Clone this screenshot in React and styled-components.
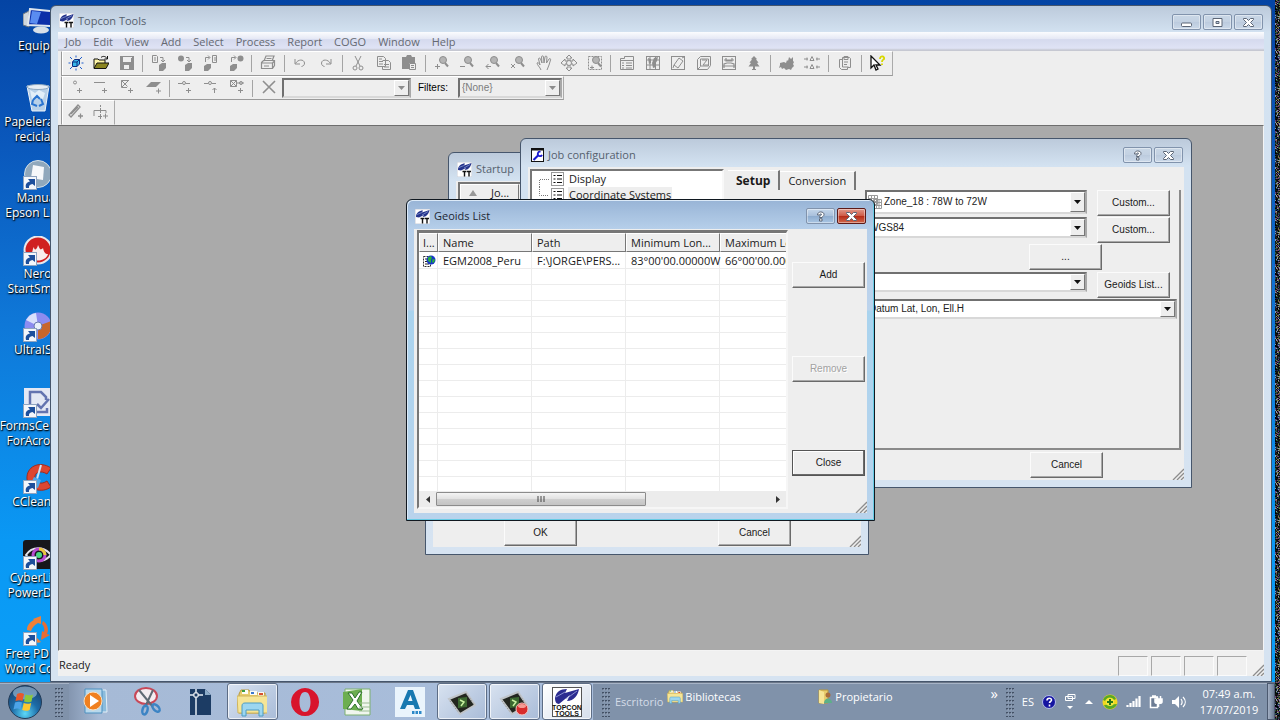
import React from "react";
import styled, { createGlobalStyle, css } from "styled-components";

const ui = `"Open Sans", "Noto Sans", sans-serif`;
const classic = `"Liberation Sans", Arial, sans-serif`;
const FACE = "#eeeeee";
const G = "#8e8e8e";

const GlobalStyle = createGlobalStyle`
  *, *::before, *::after { box-sizing: border-box; }
  body { margin: 0; font: 11px/16px ${ui}; color: #1a1a1a; }
  button, input, select { font: inherit; color: inherit; margin: 0; padding: 0; border-radius: 0; }
  svg { display: block; flex: none; }
`;

/* ---------- desktop ---------- */

const Desktop = styled.div`
  position: relative;
  display: flex;
  flex-direction: column;
  min-height: 100vh;
  overflow: hidden;
  background: linear-gradient(#0444a4 0%, #0a58bc 20%, #0f78d8 45%, #0a98f4 75%, #0aa0f8 100%);
`;

const Workspace = styled.div`
  flex: 1;
  display: flex;
  padding-right: 8px;
`;

const Shortcuts = styled.ul`
  flex: none;
  width: 50px;
  margin: 0;
  padding: 8px 0 0;
  overflow: hidden;
  list-style: none;
`;

const Shortcut = styled.li`
  width: 75px;
  height: 76px;
  display: flex;
  flex-direction: column;
  align-items: center;
  &:last-child { height: 60px; }
`;

const ShortcutLabel = styled.span`
  font-size: 12px;
  line-height: 15px;
  white-space: pre;
  text-align: center;
  color: #fff;
  text-shadow: 0 1px 2px #000, 1px 1px 1px #012;
`;

const EdgeStrip = styled.svg`
  position: absolute;
  top: 0;
  right: 0;
  width: 5px;
  height: 100%;
`;

/* ---------- windows ---------- */

const frameTone = {
  inactive: css`
    border: 1px solid #46566c;
    background: linear-gradient(#bccadb, #d3e2f1 27px, #d6e3f1);
    color: #56616e;
  `,
  active: css`
    border: 1px solid #101820;
    background: linear-gradient(#98b4d6, #b6cfea 29px, #bcd3ec 110px, #a9d3ee 111px, #b9d3ec);
    box-shadow: inset -1px -1px 0 #66cbe4, inset 1px 1px 0 #dceaf8;
    color: #1d2733;
  `,
};

const Frame = styled.section`
  display: flex;
  flex-direction: column;
  border-radius: 6px 6px 0 0;
  padding: 0 7px 7px;
  ${(p) => frameTone[p.$tone || "inactive"]}
`;

const AppFrame = styled(Frame)`
  flex: 1;
  min-width: 0;
  margin-top: 5px;
  padding-bottom: 5px;
`;

const FloatingFrame = styled(Frame)`
  position: absolute;
  left: ${(p) => p.$x}px;
  top: ${(p) => p.$y}px;
  width: ${(p) => p.$w}px;
  height: ${(p) => p.$h}px;
`;

const TitleBar = styled.header`
  flex: none;
  display: flex;
  align-items: center;
  gap: 4px;
  height: ${(p) => p.$h}px;
  padding: ${(p) => p.$pad};
`;

const Title = styled.h2`
  flex: 1;
  margin: 0;
  font: 11px/16px ${ui};
  white-space: nowrap;
`;

const Captions = styled.div`
  display: flex;
  gap: 2px;
  align-self: flex-start;
  padding-top: 5px;
`;

const CaptionButton = styled.button`
  width: 29px;
  height: 16px;
  display: grid;
  place-items: center;
  border: 1px solid ${(p) => (p.$red ? "#5c1a18" : "#8193ac")};
  border-radius: 2px;
  background: ${(p) =>
    p.$red
      ? "linear-gradient(#e09a8c, #cf5c48 48%, #b62c18 52%, #d0684c)"
      : p.$lit
      ? "linear-gradient(#c4d6ea, #a9c0dc 48%, #8eaccf 52%, #a9c6e4)"
      : "linear-gradient(#c9d7e6, #c3d1e2 50%, #bccbde 52%, #cbd9e9)"};
  box-shadow: inset 0 0 0 1px rgba(255, 255, 255, 0.4);
`;

const Client = styled.div`
  flex: 1;
  min-height: 0;
  display: flex;
  flex-direction: column;
  position: relative;
  background: ${FACE};
  color: #1a1a1a;
`;

const GripCorner = styled.svg`
  position: absolute;
  right: 0;
  bottom: 0;
`;

/* ---------- menu and toolbars ---------- */

const MenuBar = styled.nav`
  flex: none;
  display: flex;
  height: 19px;
  padding-left: 7px;
  gap: 12px;
  background: linear-gradient(#fbfcfe, #e6e9f5 35%, #d5daee 40%, #dfe3f5 85%, #c6c8d2 95%);
`;

const MenuItem = styled.button`
  border: 0;
  background: none;
  line-height: 18px;
  color: #656972;
`;

const Band = styled.div`
  flex: none;
  display: flex;
  height: ${(p) => p.$h}px;
  padding-left: 3px;
`;

const Tools = styled.div`
  display: flex;
  align-items: center;
  border-top: 1px solid #fff;
  border-left: 1px solid #999;
  border-right: 1px solid #aaa;
  border-bottom: 1px solid ${(p) => (p.$flat ? FACE : "#9a9a9a")};
  box-shadow: inset 1px 0 0 #fff;
  padding-left: 1px;
  width: ${(p) => p.$w}px;
`;

const ToolGroup = styled.div`
  display: flex;
  align-items: center;
  flex: none;
  width: ${(p) => p.$w}px;
`;

const Tool = styled.button`
  flex: 1;
  display: grid;
  place-items: center;
  height: 20px;
  padding-bottom: 2px;
  border: 0;
  background: none;
`;

const Divider = styled.i`
  flex: none;
  width: 1px;
  height: 17px;
  margin: 0 3px;
  background: #a4a4a4;
`;

const FilterLabel = styled.label`
  font: 10px/16px ${classic};
  color: #000;
  width: 47px;
  padding-left: 7px;
`;

const ComboBox = styled.span`
  position: relative;
  display: flex;
  flex: ${(p) => (p.$w ? "none" : 1)};
  width: ${(p) => (p.$w ? p.$w + "px" : "auto")};
  height: ${(p) => p.$h || 20}px;
  border: 2px solid;
  border-color: #707070 #a8a8a8 #d8d8d8 #707070;
  background: ${(p) => (p.$off ? FACE : "#fff")};
  select {
    flex: 1;
    width: 100%;
    appearance: none;
    border: 0;
    outline: 0;
    background: none;
    padding-left: ${(p) => p.$inset || 2}px;
    font: 10px/14px ${classic};
    color: ${(p) => (p.$off ? "#7c7c7c" : "#222")};
    opacity: 1;
  }
`;

const ComboArrow = styled.span`
  position: absolute;
  top: 0;
  right: 0;
  bottom: 0;
  width: 15px;
  display: grid;
  place-items: center;
  pointer-events: none;
  background: ${FACE};
  border: 1px solid;
  border-color: #fff #777 #777 #fff;
`;

const ComboIcon = styled.span`
  position: absolute;
  left: 1px;
  top: 3px;
  pointer-events: none;
`;

const Mdi = styled.main`
  flex: 1;
  background: #aaaaaa;
  border: 1px solid;
  border-color: #6e6e6e #f4f4f4 #f4f4f4 #6e6e6e;
`;

const StatusBar = styled.footer`
  flex: none;
  position: relative;
  display: flex;
  align-items: center;
  gap: 3px;
  height: 25px;
  padding: 0 17px 0 1px;
  background: #f0f0f0;
`;

const StatusText = styled.span`
  flex: 1;
  padding-top: 2px;
`;

const StatusCell = styled.span`
  width: 30px;
  height: 20px;
  align-self: flex-end;
  border: 1px solid;
  border-color: #a8a8a8 #fbfbfb #fbfbfb #a8a8a8;
`;

/* ---------- dialog parts ---------- */

const PushButton = styled.button`
  flex: none;
  width: 73px;
  height: 26px;
  background: ${FACE};
  border: 1px solid;
  border-color: #fbfbfb #6a6a6a #6a6a6a #fbfbfb;
  box-shadow: inset -1px -1px 0 #a8a8a8;
  font: 10px/16px ${classic};
  color: #1a1a1a;
  &:disabled { color: #a2a2a2; text-shadow: 1px 1px 0 #fff; }
  ${(p) => p.$default && css`border-color: #555; box-shadow: inset -1px -1px 0 #6a6a6a, inset 1px 1px 0 #fff;`}
`;

const ListHeader = styled.div`
  display: flex;
  margin: 1px 2px 0;
  border: 2px solid #777;
  border-bottom: 0;
`;

const HeaderCell = styled.span`
  display: flex;
  align-items: center;
  height: 18px;
  gap: 14px;
  width: ${(p) => p.$w}px;
  padding-left: 8px;
  border: 1px solid;
  border-color: #fff #777 #777 #fff;
`;

const Columns = styled.div`
  flex: 1;
  min-height: 0;
  display: flex;
  gap: 4px;
  padding: 2px 3px 0 2px;
`;

const Tree = styled.ul`
  flex: none;
  width: 194px;
  margin: 0;
  padding: 0 0 0 7px;
  list-style: none;
  background: #fff;
  border: 2px solid;
  border-color: #777 #f8f8f8 #f8f8f8 #777;
`;

const TreeItem = styled.li`
  display: flex;
  align-items: center;
  height: 16px;
  gap: 4px;
  span { padding: 0 1px; background: ${(p) => (p.$selected ? FACE : "none")}; }
  svg + svg { margin-left: -2px; }
`;

const Tabbed = styled.div`
  flex: 1;
  display: flex;
  flex-direction: column;
`;

const TabList = styled.div`
  display: flex;
  align-items: flex-end;
  height: 21px;
`;

const Tab = styled.button`
  height: ${(p) => (p.$on ? 20 : 19)}px;
  padding: 0 8px;
  border: 0;
  border-right: 2px solid #777;
  border-top: 1px solid #fff;
  background: none;
  font-size: ${(p) => (p.$on ? 12 : 11)}px;
  font-weight: ${(p) => (p.$on ? 700 : 400)};
`;

const TabPanel = styled.div`
  flex: 1;
  border: solid;
  border-width: 0 2px 2px 0;
  border-color: #8a8a8a;
`;

const Field = styled.div`
  display: flex;
  align-items: flex-start;
  height: ${(p) => (p.$tall ? 28 : 27)}px;
  gap: 10px;
  padding: 0 ${(p) => p.$right || 9}px 0 137px;
  justify-content: flex-end;
`;

const Footer = styled.div`
  flex: none;
  display: flex;
  gap: ${(p) => p.$gap || 0}px;
  justify-content: flex-end;
  padding: ${(p) => p.$pad};
`;

const GeoidBody = styled.div`
  flex: 1;
  min-height: 0;
  display: flex;
  gap: 4px;
  padding: 1px 2px 4px 3px;
`;

const ListView = styled.div`
  flex: 1;
  min-width: 0;
  display: flex;
  flex-direction: column;
  overflow: hidden;
  background: #fff;
  border: solid;
  border-width: 3px 2px 2px 2px;
  border-color: #777 #f6f6f6 #f6f6f6 #777;
`;

const ListScroll = styled.div`
  flex: 1;
  min-height: 0;
  overflow: hidden;
`;

const Table = styled.table`
  width: 395px;
  table-layout: fixed;
  border-collapse: separate;
  border-spacing: 0;
  th, td {
    padding: 0 0 0 5px;
    text-align: left;
    font-weight: 400;
    white-space: nowrap;
  }
  th {
    height: 19px;
    padding-left: 4px;
    overflow: hidden;
    text-overflow: ellipsis;
    line-height: 16px;
    background: ${FACE};
    border: 1px solid;
    border-color: #fff #777 #777 #fff;
  }
  td {
    height: 16px;
    line-height: 14px;
    border-right: 1px solid #ececec;
    border-bottom: 1px solid #ececec;
  }
  tbody tr:first-child td { padding-top: 2px; }
  th:first-child, td:first-child { padding-left: 3px; text-overflow: clip; }
`;

const ScrollBar = styled.div`
  flex: none;
  display: flex;
  align-items: center;
  height: 16px;
  background: #ececec;
`;

const ScrollArrow = styled.button`
  width: 17px;
  height: 16px;
  display: grid;
  place-items: center;
  border: 0;
  background: none;
`;

const Track = styled.div`
  flex: 1;
`;

const Thumb = styled.div`
  width: 63%;
  height: 14px;
  display: grid;
  place-items: center;
  border: 1px solid #8c8c8c;
  border-radius: 1px;
  background: linear-gradient(#f4f4f4, #e2e2e2 48%, #cfcfcf 52%, #c4c4c4);
`;

const Commands = styled.div`
  flex: none;
  display: flex;
  flex-direction: column;
  gap: 68px;
  padding-top: 32px;
`;

/* ---------- taskbar ---------- */

const TaskBar = styled.footer`
  position: relative;
  flex: none;
  display: flex;
  align-items: center;
  height: 38px;
  padding-right: 5px;
  background: #8092aa;
  border-top: 1px solid #6a7688;
  box-shadow: inset 0 1px 0 #a6b3c6;
  color: #fff;
`;

const StartButton = styled.button`
  width: 50px;
  display: grid;
  place-items: center;
  border: 0;
  background: none;
`;

const Handle = styled.span`
  flex: none;
  margin-left: ${(p) => p.$gap || 0}px;
`;

const Pinned = styled.div`
  flex: none;
  display: flex;
  align-self: stretch;
  width: 524px;
  margin-left: 6px;
  background: linear-gradient(90deg, #8496b0, #a6bad6 30px, #a9bedc);
`;

const TaskButton = styled.button`
  flex: 1;
  display: grid;
  place-items: center;
  border: 1px solid transparent;
  border-radius: 3px;
  margin: 0 1px;
  background: none;
  ${(p) =>
    p.$open &&
    css`
      border-color: #5d6d85;
      background: linear-gradient(135deg, ${p.$open === 2 ? "#fff, #d5deeb" : "#d8e2f0, #a9bcd8"});
      box-shadow: inset 0 0 0 1px rgba(255, 255, 255, 0.7);
    `}
`;

const BandTitle = styled.span`
  margin-left: 5px;
  color: #d4dce8;
`;

const BandLink = styled.a`
  display: flex;
  align-items: center;
  gap: 2px;
  width: ${(p) => p.$w}px;
  padding-bottom: 10px;
  color: #fff;
  text-decoration: none;
`;

const Links = styled.div`
  flex: 1;
  display: flex;
  margin-left: 4px;
`;

const Chevron = styled.button`
  border: 0;
  background: none;
  font-size: 15px;
  padding: 0 8px 18px 0;
`;

const Tray = styled.div`
  display: flex;
  align-items: center;
  gap: 8px;
  margin-left: 8px;
`;

const Clock = styled.time`
  width: 72px;
  margin: 0 2px 0 7px;
  text-align: center;
`;

const ShowDesktop = styled.button`
  width: 8px;
  align-self: stretch;
  border: 1px solid #4c5a70;
  background: linear-gradient(90deg, #a3b0c4, #6c7c94);
`;

/* ---------- drawings ---------- */

const TopconLogo = ({ size = 15 }) => (
  <svg width={size} height={size} viewBox="0 0 15 15">
    <rect width="15" height="15" fill="#fff" stroke="#c9ccd6" />
    <path d="M1 8C1 4 4 1.500 8 1.500L7 3.500 14.500 1C14 4.500 11.500 8 7.500 8L9 6 4 8.500z" fill="#26348c" />
    <path d="M2 5.500L7 3.500M7 6L13 2.500" stroke="#8ea2d8" strokeWidth=".7" />
    <path d="M5.500 9.500h4M7.500 9.500v5M10 9.500h4M12 9.500v5" stroke="#111" strokeWidth="1.400" />
  </svg>
);

const WrenchIcon = () => (
  <svg width="13" height="14" viewBox="0 0 13 14">
    <rect x=".5" y=".5" width="12" height="13" fill="#fff" stroke="#111" />
    <path d="M1 1.500h11" stroke="#111" strokeWidth="2" />
    <path d="M2.500 12L7 7.500" stroke="#1a1ad0" strokeWidth="2.200" />
    <path d="M9.500 3.800a2.200 2.200 0 1 0 1.500 3" fill="none" stroke="#1a1ad0" strokeWidth="1.800" />
  </svg>
);

const PageIcon = () => (
  <svg width="13" height="14" viewBox="0 0 13 14">
    <rect x=".5" y=".5" width="12" height="13" fill="#fff" stroke="#999" />
    <path d="M2.500 3.500h2M2.500 7h2M2.500 10.500h2M6 3.500h5M6 7h5M6 10.500h5" stroke="#111" strokeWidth="1.200" />
  </svg>
);

const TreeLines = ({ last }) => (
  <svg width="10" height="16">
    <path d={last ? "M.5 0V8.500H10" : "M.5 16V8.500H10"} fill="none" stroke="#777" strokeDasharray="1 1" />
  </svg>
);

const GeoidIcon = () => (
  <svg width="14" height="13" viewBox="0 0 14 13">
    <path d="M1.500 1.500h7v10h-7z" fill="#fff" stroke="#333" strokeDasharray="2 1" />
    <path d="M3 4h2M3 6.500h2M3 9h4" stroke="#222" />
    <circle cx="9" cy="5" r="4.500" fill="#1636c8" />
    <path d="M6 2.500l3-1.500 1 2-1 1.500v3.500L6 6zM10.500 4l2.500.5-1 3-2 0z" fill="#27b03c" />
  </svg>
);

const GridIcon = () => (
  <svg width="14" height="14" viewBox="0 0 14 14">
    <path d="M.5.500h9v9h-9zM.5 3.500h9M.5 6.500h9M3.500.500v9M6.500.500v9M5.500 4.500h8v9h-8zM5.500 7.500h8M5.500 10.500h8M8.500 4.500v9M11 4.500v9" fill="none" stroke="#9a9a9a" />
  </svg>
);

const Down = ({ c = "#111" }) => (
  <svg width="7" height="4"><path d="M0 0H7L3.500 4Z" fill={c} /></svg>
);

const Grip = () => (
  <GripCorner width="12" height="12">
    <path d="M1 12L12 1M5 12L12 5M9 12L12 9" stroke="#8c8c8c" strokeWidth="1.300" />
  </GripCorner>
);

const glyphs = {
  min: <rect x="1.500" y="6" width="10" height="3.500" rx="1" />,
  max: <path fillRule="evenodd" d="M2 1.500h9v8H2zM5 4.500v2h3v-2z" />,
  close: <path d="M1.500 1.500h3l2 2 2-2h3v1L8.500 5.500l3 3v1h-3l-2-2-2 2h-3v-1l3-3-3-3z" />,
  help: <path d="M3.500 4c0-4 6.500-4 6.500-.5 0 2-2 2-2 3H5.500c0-2 2-2 2-3 0-1-1.500-1-1.500.500zM5.500 7.800H8V10H5.500z" />,
};

const Glyph = ({ k }) => (
  <svg width="13" height="11" viewBox="0 0 13 11">
    <g fill="#fff" stroke="#5c6676" strokeWidth="1">{glyphs[k]}</g>
  </svg>
);

const Caption = ({ k, label, ...rest }) => (
  <CaptionButton aria-label={label} {...rest}><Glyph k={k} /></CaptionButton>
);

const plus = "M9 11.500h5M11.500 9v5";
const lens = (extra) => (
  <>
    <circle cx="9" cy="5" r="3.500" fill="#b4b4b4" stroke={G} />
    <path d="M11 8l3 3.500" stroke={G} strokeWidth="2" />
    <path d={extra} stroke={G} fill="none" />
  </>
);
const blob = "M8 10l3-2h4v5l-3 3H8z";

const toolArt = {
  new: (
    <>
      <path d="M2 2l2 2M8 .5v2M14 2l-2 2M.5 8h2M13.500 8h2M2 14l2-2M8 13.500v2M14 14l-2-2" stroke="#1c5ccc" />
      <path d="M4.500 7l2-2.500h5V9l-2.500 2.500H4.500z" fill="#38b8e8" stroke="#0c2c80" />
      <path d="M4.500 7H9v4.500M9 7l2.500-2.500" fill="none" stroke="#0c2c80" />
    </>
  ),
  open: (
    <>
      <path d="M1 13V4h4l1 1h6v3" fill="#fff6a8" stroke="#111" />
      <path d="M1 13.500L4 8h12l-3 5.500z" fill="#8a8420" stroke="#111" />
      <path d="M8 2.500c2-2 5-1 6 1M14.500 1v3h-3" fill="none" stroke="#111" />
    </>
  ),
  save: <path fillRule="evenodd" fill={G} d="M1 1h14v14H1zM4 2v5h8V2zM5 10v4h5v-4zM12 2h1v1h-1z" />,
  imp1: <><path d="M1.500.500h4l1 1v6h-5zM3 3h2M3 5h2M9 2.500h3v4M10 5l2 2 2-2" fill="none" stroke={G} /><path d={blob} fill={G} /></>,
  imp2: <><circle cx="4" cy="3.500" r="3" fill={G} /><path d="M9 2.500h3v4M10 5l2 2 2-2" fill="none" stroke={G} /><path d={blob} fill={G} /></>,
  exp1: <><path d="M10.500.500h4v7h-4zM12 3h2M12 5h2M3.500 7V2.500h4M6 .5l2 2-2 2" fill="none" stroke={G} /><path d="M2 11l3-2h4v4l-3 3H2z" fill={G} /></>,
  exp2: <><circle cx="12.500" cy="3.500" r="3" fill={G} /><path d="M3.500 7V2.500h4M6 .5l2 2-2 2" fill="none" stroke={G} /><path d="M2 11l3-2h4v4l-3 3H2z" fill={G} /></>,
  print: <path d="M4 6l2-5h8l-2 5M1.500 7.500l2-2h11v5l-2 3h-11zM1.500 8h11v5M12.500 8l2-2M4 11h5M6.500 3.500h5" fill="none" stroke={G} strokeWidth="1.200" />,
  undo: <path d="M3 4v5h5M3.500 8.500C6 4 12 4 12.500 8c0 2-1 3-3 3.500" fill="none" stroke={G} />,
  redo: <path d="M13 4v5H8M12.500 8.500C10 4 4 4 3.500 8c0 2 1 3 3 3.500" fill="none" stroke={G} />,
  cut: <><path d="M5 1l5 10M11 1L6 11" stroke={G} /><circle cx="5" cy="13" r="2" fill="none" stroke={G} /><circle cx="11" cy="13" r="2" fill="none" stroke={G} /></>,
  copy: <path d="M1.500 1.500h6l2 2v8h-8zM6.500 5.500h6l2 2v7h-8v-3M3 4h3M3 6.500h4M3 9h4M8 9.500h5M8 12h5" fill="none" stroke={G} />,
  paste: <><path d="M1 2h4l1-2h4l1 2h3v6H8v6H1z" fill={G} /><path d="M8.500 8.500h6v6h-6zM10 10.500h3M10 12.500h3" fill="#eee" stroke={G} /></>,
  zin: lens("M1 11.500h5M3.500 9v5"),
  zout: lens("M1 11.500h5"),
  zprev: lens("M1 11.500h5M3.500 9L1 11.500L3.500 14"),
  zall: lens("M1 9l4 4M5 9l-4 4"),
  hand: <path d="M5 15C4 12 1 10 1 8c1-1 2 0 3 2L2.500 4c0-1 1.500-1.500 2 0L6 8 5.500 2c0-1.500 2-1.500 2 0L8 8l1-6c0-1.500 2-1 2 0l-.5 6L13 4c1-1 2 0 1.500 1L13 10l-2 5" fill="none" stroke={G} />,
  pan: <><path d="M8 0l3 3H9v3h3V4l4 4-4 3V9H9v4h2l-3 3-3-3h2V9H4v2L0 8l4-4v2h3V3H5z" fill="none" stroke={G} /><circle cx="8" cy="8" r="2.500" fill="#eee" stroke={G} /></>,
  zwin: <><rect x="1.500" y="1.500" width="13" height="13" fill="none" stroke={G} strokeDasharray="2 1" />{lens("M3 12.500h4M5 10.500v4")}</>,
  list: <path d="M1.500 3.500h4v-2h9v13h-13zM1.500 5.500h13M3 8h2M7 8h6M3 10.500h2M7 10.500h6M3 13h2M7 13h6" fill="none" stroke={G} />,
  map: <><rect x="1.500" y="1.500" width="13" height="13" fill="none" stroke={G} /><path d="M2 5h12M2 10h12M5 2v12M10.500 2v12" stroke={G} /><path d="M3 3l3 1v4L4 9zM7 8l2-5 4-1-1 4-2 3 1 3-3 1z" fill={G} /></>,
  cad: <><rect x="1.500" y="1.500" width="13" height="13" fill="none" stroke={G} /><path d="M4 10l5-7 4 3-5 7zM4 10l-1 3M12 3l2-1" fill="none" stroke={G} /></>,
  three: <path d="M1.500 4.500l3-3h10v9l-3 4h-10zM4.500 4v7h8V4zM6 5l5 0-4 5h5M1.500 14.500l3-3" fill="none" stroke={G} />,
  gps: <><rect x="1.500" y="1.500" width="13" height="13" fill="none" stroke={G} /><path d="M3 5h10M5 3v3h6V3M3 13V9l3-1h4l3 1v4M2 11h12" fill="none" stroke={G} strokeWidth="1.200" /></>,
  tree: <path d="M8 1l3 3-1 .5 2.500 3-1.500.500 2.500 3.500H9V14h1v1H6v-1h1v-2.500H2.500L5 8 3.500 7.500 6 4.500 5 4z" fill={G} />,
  dozer: <path d="M1 8l4-1 2 1 1-3 1 1 1-4 2 2 2-2v4l1 1-1 2 1 2-2 2-1 2-2-1-3 1-2-2-2 1-1-2-2 1 1-3z" fill={G} />,
  adj: <path d="M8 1.500l2 4H6zM8 9.500l2 4H6zM0 4h4M3 2.500v3M12 4h4M13 2.500v3M0 12h4M3 10.500v3M12 12h4M13 10.500v3" fill="none" stroke={G} />,
  report: <path d="M2.500 4.500h3v-2h7l1 1v9h-3v2h-6l-2-2zM5.500 4v8h6M7 1.500h4v3H7zM7 7h4M7 9.500h3" fill="none" stroke={G} />,
  help: (
    <>
      <path d="M2 1v12l3-3 2 5 2-1-2-4h4z" fill="#fff" stroke="#111" strokeWidth="1.300" />
      <path d="M11 4c0-4 5-3 4 0-1 1-2 1-2 3M13 8.500V10" fill="none" stroke="#d8d800" strokeWidth="1.800" />
    </>
  ),
  point: <><circle cx="7" cy="3.500" r="1.500" fill="none" stroke={G} /><path d={plus} stroke={G} /></>,
  line: <path d={"M1 3.500h11" + plus} stroke={G} />,
  poly: <path d={"M10 1.500H2.500v7H8M2.500 1.500l6 6M3 8l6.500-6.500" + plus} fill="none" stroke={G} />,
  plane: <><path d="M1 8l5-5h10l-5 5z" fill={G} /><path d="M11 12h5M13.500 9.500v5" stroke={G} /></>,
  obs1: <><path d={"M1 4.500h4M9 4.500h4" + plus} stroke={G} /><circle cx="7" cy="4" r="1.500" fill="none" stroke={G} /></>,
  obs2: <><path d="M1 4.500h4M9 4.500h4M11.500 14V9M9.500 11l2-2 2 2" fill="none" stroke={G} /><circle cx="7" cy="4" r="1.500" fill="none" stroke={G} /></>,
  obs3: <><path d={"M1.500 1.500h6v6h-6zM1.500 1.500l6 6M1.500 7.500l6-6M7 4h8" + plus} fill="none" stroke={G} /><circle cx="12" cy="4" r="1.500" fill="none" stroke={G} /></>,
  del: <path d="M2 2l12 12M14 2L2 14" stroke={G} strokeWidth="1.600" />,
  road: <path d="M1 11L10 1l2 2-9 10zM3 10l7-7M10 12h5M12.500 9.500v5" fill="none" stroke={G} strokeWidth="1.300" />,
  cross: <><path d="M1 12V6.500h12V9M10 12h5M12.500 9.500v5M5 12.500h4" fill="none" stroke={G} /><path d="M7.500 1v14" stroke={G} strokeDasharray="2 1" /></>,
};

const ToolIcon = ({ k }) => <svg width="16" height="16" viewBox="0 0 16 16">{toolArt[k]}</svg>;

const renderTools = (keys) =>
  keys.split(" ").map((k, i) =>
    k === "|" ? <Divider key={i} /> : <Tool key={i} aria-label={k}><ToolIcon k={k} /></Tool>
  );

const Arrow = () => (
  <g>
    <rect x="0.500" y="16.500" width="13" height="13" fill="#f4f7fb" stroke="#8fa4c0" />
    <path d="M3 28c-1-4 1-6 4-6.500L5 19h7v7l-2.500-2C7 24.500 5.500 25.500 6 28z" fill="#1d4f9c" />
  </g>
);

const shortcutArt = {
  pc: (
    <>
      <path d="M0 6l6-3v16l-6-2z" fill="#cfd6dc" stroke="#6a7480" />
      <path d="M7 1l21 2v15l-23-1z" fill="#0d2fa8" stroke="#dfe6ee" strokeWidth="2" />
      <path d="M9 3l9 1-4 12-7-1z" fill="#5a8cf0" />
      <ellipse cx="18" cy="22" rx="8" ry="3.500" fill="#d8e0e8" />
    </>
  ),
  bin: (
    <>
      <path d="M4 2h22l-4 25H9z" fill="#b8d0e8" stroke="#eef4fa" />
      <ellipse cx="15" cy="3" rx="11" ry="2.500" fill="#e8eef4" stroke="#8fa8c0" />
      <path d="M7 6l5 3 4-3 6 3-2 6-6-2-5 3z" fill="#eef6fc" opacity=".8" />
      <path d="M10 16l4-4 3 3M18 15l2 5-4 2M14 22l-5-2 1-4" fill="none" stroke="#2a74d0" strokeWidth="2" />
    </>
  ),
  manual: <><circle cx="15" cy="14" r="13.500" fill="#90a8bc" stroke="#d4e0e8" /><path d="M10 5l11 2-1 13-12-2z" fill="#f6f8fa" /></>,
  nero: <><circle cx="15" cy="14" r="13.500" fill="#d02020" stroke="#e8e8ec" strokeWidth="2" /><path d="M6 19c4 0 3-6 5-8 0 4 3 3 4-2 2 4 2 6 5 3 1 4 2 6 5 6-2 8-16 9-19 1z" fill="#f8eceb" /></>,
  iso: <><circle cx="15" cy="14" r="13.500" fill="#8c8cf0" /><path d="M15 14L28 9a14 14 0 0 1-13 18z" fill="#c8662c" /><path d="M15 14L3 8a14 14 0 0 1 10-7z" fill="#d8e0fc" /><circle cx="15" cy="14" r="4" fill="#e8f0fa" stroke="#6a7ab0" /></>,
  forms: <><rect x="1" y="0" width="28" height="28" fill="#e4e8f4" /><path d="M7 17V4h11l5 5v3M12 24h12v-4M14 16l4 4 8-9" fill="none" stroke="#6474b0" strokeWidth="2.500" /></>,
  cc: <><path d="M28 4C16-4 3 3 4 15c1 10 14 15 24 8l-4-6c-6 4-11 2-12-3-1-6 6-8 12-4z" fill="#dc4630" stroke="#9c2c20" /><path d="M18 1l-4 14" stroke="#d0e4f4" strokeWidth="2" /><path d="M11 13l7 3-3 8-8-3z" fill="#4ca8ec" /></>,
  dvd: <><rect width="30" height="29" rx="3" fill="#17171b" /><path d="M3 15c6-9 18-9 25 0-7 8-19 8-25 0z" fill="none" stroke="#e4e4ec" strokeWidth="2" /><circle cx="16" cy="15" r="6" fill="none" stroke="#b84cd0" strokeWidth="3" /><path d="M16 9a6 6 0 0 1 6 6" fill="none" stroke="#e8c83c" strokeWidth="3" /><circle cx="16" cy="15" r="3" fill="#48d880" /></>,
  pdf: <><path d="M10 3l8-3v8l-3-1C11 9 9 12 8 15l-4-1c0-5 3-8 7-10z" fill="#f08038" /><path d="M20 5c5 3 6 9 4 13l3 1-9 5 1-9 2 1c1-3 0-6-2-8z" fill="#e86c34" /><path d="M14 22l4 4c-2 1-4 1-5 0z" fill="#f08038" /></>,
};

const shortcuts = [
  ["pc", "Equipo", false],
  ["bin", "Papelera de\nreciclaje", false],
  ["manual", "Manual\nEpson L210", true],
  ["nero", "Nero\nStartSmart", true],
  ["iso", "UltraISO", true],
  ["forms", "FormsCentral\nForAcrobat", true],
  ["cc", "CCleaner", true],
  ["dvd", "CyberLink\nPowerDVD", true],
  ["pdf", "Free PDF to\nWord Con...", true],
];

const Orb = () => (
  <svg width="36" height="36" viewBox="0 0 36 36">
    <defs>
      <radialGradient id="orb" cx=".5" cy=".85" r=".8">
        <stop offset="0" stopColor="#5cd8f8" /><stop offset=".5" stopColor="#1c6ca8" /><stop offset="1" stopColor="#1c4470" />
      </radialGradient>
    </defs>
    <circle cx="18" cy="18" r="16.500" fill="url(#orb)" stroke="#243c58" />
    <ellipse cx="18" cy="9" rx="12" ry="6.500" fill="#b8d4e8" opacity=".55" />
    <path d="M10 10c3-1.500 5-1 7 0l-1.500 7c-2-1-4-1.200-7 0z" fill="#e8582c" />
    <path d="M18.500 10.500c2 1 5 1.200 7.500 0l-1.500 7c-3 1.200-5 1-7.500 0z" fill="#8cc83c" />
    <path d="M8 18.500c3-1.200 5-1 7 0l-1.500 7c-2-1-4-1.500-7 0z" fill="#4ca4e8" />
    <path d="M16.700 19c2 1 4.500 1.200 7.500 0l-1.600 7c-2.500 1.200-5 1-7.400 0z" fill="#fcc830" />
  </svg>
);

const DotGrip = () => (
  <svg width="8" height="30">
    <path d="M1 1v29M4 1v29M7 1v29" stroke="#2a3648" strokeWidth="1.400" strokeDasharray="1.500 2.500" />
    <path d="M2 2v28M5 2v28M8 2v28" stroke="#b4c2d6" strokeWidth=".7" strokeDasharray="1.500 2.500" />
  </svg>
);

const folder = (
  <>
    <path d="M2 7l2-4h8l2 3h14v20H2z" fill="#e8cc6c" stroke="#b8983c" />
    <path d="M5 3h6v4H5zM13 4h7v4h-7zM21 5h6v4h-6z" fill="#fbfbf4" />
    <path d="M5 3h3v2H5z" fill="#3c9c3c" /><path d="M22 6h4v2h-4z" fill="#d85030" /><path d="M14 5h3v2h-3z" fill="#3c78d0" />
    <path d="M0 9h31v17H1z" fill="#f6e596" stroke="#cfb45c" />
    <path d="M5 29V19c0-2 1-3 3-3h15c2 0 3 1 3 3v10h-4v-6H9v6z" fill="#9cd6f0" stroke="#4c9cc4" />
  </>
);

const film = (
  <>
    <path d="M2 12l17-7 9 13-15 9z" fill="#23261f" stroke="#c0c4c8" strokeWidth="2" />
    <path d="M11 11l9-1v10l-9 1z" fill="#3c6830" />
    <path d="M13 13l4 2-3 4" fill="none" stroke="#c8f0a0" strokeWidth="1.500" />
    <path d="M3 14l9 12M19 6l8 11" stroke="#888" strokeDasharray="1 2" />
  </>
);

const taskArt = {
  media: <><path d="M8 3h18l1 22H8z" fill="#8cbcdc" stroke="#e4f0f8" /><path d="M5 2h17v24H5z" fill="#b8d8ec" stroke="#4c90c0" /><circle cx="13" cy="14" r="9" fill="#f08020" stroke="#fbe0c0" /><path d="M10 8l9 6-9 6z" fill="#fff" /></>,
  snip: <><ellipse cx="13" cy="9" rx="11" ry="8" fill="#f4ecf0" stroke="#c84858" strokeWidth="2" /><path d="M6 3l14 17M20 3l-8 17" stroke="#606a74" strokeWidth="2" /><ellipse cx="12" cy="23" rx="2.500" ry="4.500" fill="none" stroke="#3c84c4" strokeWidth="2.500" transform="rotate(15 12 23)" /><ellipse cx="23" cy="21" rx="2.500" ry="4.500" fill="none" stroke="#3c84c4" strokeWidth="2.500" transform="rotate(-45 23 21)" /></>,
  cad: <><path d="M5 2h15l6 6v20H5z" fill="#1c3c64" /><path d="M20 2l6 6h-6z" fill="#8cacc8" /><path d="M11 2v26M5 8h13" stroke="#e4ecf4" strokeWidth="1.500" /><path d="M9 6h4v4H9z" fill="#1c3c64" stroke="#fff" /></>,
  folder,
  opera: <path fillRule="evenodd" fill="#d8142c" d="M15 1a14 14 0 1 0 .1 0zM15 5c4 0 5.500 5 5.500 10S19 25 15 25 9.500 20 9.500 15 11 5 15 5z" />,
  excel: <><path d="M3 2h25v26H3z" fill="#f0f6ee" stroke="#7cb070" /><path d="M1 5l19-3v22L1 22z" fill="#6cae50" /><path d="M6 6h4l3 5 4-6h3l-5 9 6 8h-5l-3-5-4 5H5l6-9z" fill="#fff" stroke="#2c702c" /><path d="M17 16h11M17 20h11M17 24h11" stroke="#9cbc94" /></>,
  acad: <><rect width="30" height="30" fill="#eaf4fc" /><path d="M5 22L13 3h5l7 19h-5l-1.500-4H12l-2 4zM13 14h4.500L15.500 8z" fill="#1878b0" /><path d="M17 25.500h10" stroke="#2c88c8" strokeWidth="3" strokeDasharray="2.500 1" /></>,
  film,
  rec: <>{film}<circle cx="23" cy="22" r="6" fill="#d82c2c" stroke="#f4c4c0" /><ellipse cx="23" cy="19" rx="4" ry="2" fill="#f49c94" /></>,
  topcon: <><rect x=".5" y=".5" width="29" height="29" fill="#fff" stroke="#555" /><path d="M3 11C4 5 8 2 15 2L13 6 27 2c-1 6-5 12-12 12l3-6L7 17c-3 0-4-3-4-6z" fill="#2c2c90" /><path d="M4 10L13 5M14 12l11-8" stroke="#a0a8e0" strokeWidth=".8" /></>,
};

const TopconWords = styled.text`
  font: 700 7px ${classic};
  fill: #111;
  text-anchor: middle;
`;

const tasks = [
  ["media", 0], ["snip", 0], ["cad", 0], ["folder", 1], ["opera", 0],
  ["excel", 0], ["acad", 0], ["film", 1], ["rec", 1], ["topcon", 2],
];

const trayIcons = [
  <svg key="help" width="14" height="14"><circle cx="7" cy="7" r="6.500" fill="#1414a0" stroke="#b4bce8" /><path d="M5 5.500c0-3 4.500-3 4.500-.500 0 1.500-2 1.500-2 3M7.500 9.500v2" fill="none" stroke="#fff" strokeWidth="1.600" /></svg>,
  <svg key="bar" width="12" height="18"><path d="M4 1.500h7v4H4zM1.500 3.500h7v4h-7z" fill="#8092aa" stroke="#fff" /><path d="M3 13h6l-3 3z" fill="#fff" /></svg>,
  <svg key="up" width="10" height="6"><path d="M1 5h8L5 1z" fill="#fff" /></svg>,
  <svg key="shield" width="16" height="16"><circle cx="8" cy="8" r="7.500" fill="#f0d820" /><path d="M1 6c2-6 11-7 13-1l-2 1c-3-4-7-3-9 1zM15 10c-2 6-11 7-13 1" fill="#58a828" /><circle cx="8" cy="8" r="4" fill="#f4e83c" /><path d="M8 5v6M5 8h6" stroke="#287818" strokeWidth="2" /></svg>,
  <svg key="net" width="15" height="13"><path d="M1.500 12v-2M4.500 12V8M7.500 12V6M10.500 12V3.500M13.500 12V1" stroke="#fff" strokeWidth="2.200" /></svg>,
  <svg key="power" width="14" height="15"><path d="M1.500 3.500h7v10h-7zM3 2h4" fill="#6c7c94" stroke="#fff" strokeWidth="1.500" /><path d="M6 5h7v3c0 2-7 2-7 0zM8 5V2M11.500 5V2M9.500 9v4" stroke="#fff" strokeWidth="1.500" fill="#fff" /></svg>,
  <svg key="vol" width="15" height="14"><path d="M1 5h3l4-4v12L4 9H1z" fill="#fff" /><path d="M10 4c1.500 2 1.500 4 0 6M12 2c3 3 3 7 0 10" fill="none" stroke="#fff" strokeWidth="1.200" /></svg>,
];

const noise = Array.from({ length: 360 }, (_, i) => {
  const n = (i * 7919 + ((i * i * 31) % 977) * 613) % 1009;
  const palette = ["#111", "#2c5c34", "#111", "#6c3c70", "#222", "#8a9aa4", "#1c2c5c", "#111", "#7c7440", "#000"];
  return { x: i % 5, y: Math.floor(i / 5), c: palette[n % 10] };
});

/* ---------- application ---------- */

const Combo = ({ label, value, icon, ...rest }) => (
  <ComboBox {...rest}>
    {icon && <ComboIcon>{icon}</ComboIcon>}
    <select aria-label={label} disabled={rest.$off} defaultValue={value}>
      <option>{value}</option>
    </select>
    <ComboArrow><Down c={rest.$off ? "#8c8c8c" : "#111"} /></ComboArrow>
  </ComboBox>
);

const MainWindow = () => (
  <AppFrame>
    <TitleBar $h={26} $pad="3px 1px 0 1px">
      <TopconLogo />
      <Title>Topcon Tools</Title>
      <Captions>
        <Caption k="min" label="Minimize" />
        <Caption k="max" label="Maximize" />
        <Caption k="close" label="Close" />
      </Captions>
    </TitleBar>
    <Client>
      <MenuBar>
        {["Job", "Edit", "View", "Add", "Select", "Process", "Report", "COGO", "Window", "Help"].map((m) => (
          <MenuItem key={m}>{m}</MenuItem>
        ))}
      </MenuBar>
      <Band $h={25}>
        <Tools $w={832}>
          <ToolGroup $w={827}>
            {renderTools("new open save | imp1 imp2 exp1 exp2 | print | undo redo | cut copy paste | zin zout zprev zall hand pan zwin | list map cad three gps tree | dozer adj | report | help")}
          </ToolGroup>
        </Tools>
      </Band>
      <Band $h={24}>
        <Tools $w={503}>
          <ToolGroup $w={219}>{renderTools("point line poly plane | obs1 obs2 obs3 | del")}</ToolGroup>
          <Combo label="Name" value="" $off $w={129} />
          <FilterLabel htmlFor="filters">Filters:</FilterLabel>
          <ComboBox $off $w={104}>
            <select id="filters" disabled><option>{"{None}"}</option></select>
            <ComboArrow><Down c="#8c8c8c" /></ComboArrow>
          </ComboBox>
        </Tools>
      </Band>
      <Band $h={25}>
        <Tools $w={54} $flat>
          <ToolGroup $w={51}>{renderTools("road cross")}</ToolGroup>
        </Tools>
      </Band>
      <Mdi />
      <StatusBar>
        <StatusText>Ready</StatusText>
        <StatusCell /><StatusCell /><StatusCell /><StatusCell />
        <Grip />
      </StatusBar>
    </Client>
  </AppFrame>
);

const StartupWindow = () => (
  <FloatingFrame $x={448} $y={152} $w={300} $h={300}>
    <TitleBar $h={28} $pad="4px 1px 0 1px">
      <TopconLogo />
      <Title>Startup</Title>
    </TitleBar>
    <Client>
      <ListHeader>
        <HeaderCell $w={59}>
          <svg width="8" height="6"><path d="M0 6L4 0l4 6z" fill="#999" /></svg>
          Jo...
        </HeaderCell>
      </ListHeader>
    </Client>
  </FloatingFrame>
);

const ConfirmWindow = () => (
  <FloatingFrame $x={425} $y={300} $w={444} $h={255}>
    <Client>
      <Track />
      <Footer $gap={141} $pad="0 70px 1px 0">
        <PushButton>OK</PushButton>
        <PushButton>Cancel</PushButton>
      </Footer>
      <Grip />
    </Client>
  </FloatingFrame>
);

const JobConfiguration = () => (
  <FloatingFrame $x={520} $y={138} $w={672} $h={350}>
    <TitleBar $h={28} $pad="3px 1px 0 3px">
      <WrenchIcon />
      <Title>Job configuration</Title>
      <Captions>
        <Caption k="help" label="Help" />
        <Caption k="close" label="Close" />
      </Captions>
    </TitleBar>
    <Client>
      <Columns>
        <Tree>
          <TreeItem><TreeLines /><PageIcon /><span>Display</span></TreeItem>
          <TreeItem $selected><TreeLines last /><PageIcon /><span>Coordinate Systems</span></TreeItem>
        </Tree>
        <Tabbed>
          <TabList role="tablist">
            <Tab role="tab" $on>Setup</Tab>
            <Tab role="tab">Conversion</Tab>
          </TabList>
          <TabPanel>
            <Field>
              <Combo label="Projection" value="Zone_18 : 78W to 72W" icon={<GridIcon />} $inset={17} $h={24} />
              <PushButton>Custom...</PushButton>
            </Field>
            <Field>
              <Combo label="Datum" value="WGS84" $h={21} />
              <PushButton>Custom...</PushButton>
            </Field>
            <Field $right={77} $tall>
              <PushButton>...</PushButton>
            </Field>
            <Field>
              <Combo label="Geoid" value="" $h={20} />
              <PushButton>Geoids List...</PushButton>
            </Field>
            <Field $right={2}>
              <Combo label="Coordinate type" value="Datum Lat, Lon, Ell.H" $h={20} />
            </Field>
          </TabPanel>
        </Tabbed>
      </Columns>
      <Footer $pad="2px 81px 2px 0"><PushButton>Cancel</PushButton></Footer>
      <Grip />
    </Client>
  </FloatingFrame>
);

const GeoidsList = () => (
  <FloatingFrame $x={406} $y={199} $w={469} $h={322} $tone="active">
    <TitleBar $h={29} $pad="3px 1px 0 1px">
      <TopconLogo />
      <Title>Geoids List</Title>
      <Captions>
        <Caption k="help" label="Help" $lit />
        <Caption k="close" label="Close" $red />
      </Captions>
    </TitleBar>
    <Client>
      <GeoidBody>
        <ListView>
          <ListScroll>
            <Table>
              <colgroup>
                <col width="19" /><col width="94" /><col width="94" /><col width="94" /><col width="94" />
              </colgroup>
              <thead>
                <tr><th>I...</th><th>Name</th><th>Path</th><th>Minimum Lon...</th><th>Maximum Lon...</th></tr>
              </thead>
              <tbody>
                <tr>
                  <td><GeoidIcon /></td><td>EGM2008_Peru</td><td>F:\JORGE\PERS...</td>
                  <td>83°00'00.00000W</td><td>66°00'00.00000W</td>
                </tr>
                {Array.from({ length: 14 }, (_, i) => (
                  <tr key={i}><td /><td /><td /><td /><td /></tr>
                ))}
              </tbody>
            </Table>
          </ListScroll>
          <ScrollBar>
            <ScrollArrow aria-label="Scroll left"><svg width="4" height="7"><path d="M4 0v7L0 3.500z" fill="#333" /></svg></ScrollArrow>
            <Track><Thumb><svg width="8" height="6"><path d="M1 0v6M4 0v6M7 0v6" stroke="#444" /></svg></Thumb></Track>
            <ScrollArrow aria-label="Scroll right"><svg width="4" height="7"><path d="M0 0v7l4-3.500z" fill="#333" /></svg></ScrollArrow>
          </ScrollBar>
        </ListView>
        <Commands>
          <PushButton>Add</PushButton>
          <PushButton disabled>Remove</PushButton>
          <PushButton $default>Close</PushButton>
        </Commands>
      </GeoidBody>
      <Grip />
    </Client>
  </FloatingFrame>
);

export default function App() {
  return (
    <Desktop>
      <GlobalStyle />
      <Workspace>
        <Shortcuts>
          {shortcuts.map(([k, label, link]) => (
            <Shortcut key={k}>
              <svg width="30" height="30" viewBox="0 0 30 30">
                {shortcutArt[k]}
                {link && <Arrow />}
              </svg>
              <ShortcutLabel>{label}</ShortcutLabel>
            </Shortcut>
          ))}
        </Shortcuts>
        <MainWindow />
      </Workspace>
      <StartupWindow />
      <ConfirmWindow />
      <JobConfiguration />
      <GeoidsList />
      <TaskBar>
        <StartButton aria-label="Start"><Orb /></StartButton>
        <Handle $gap={5}><DotGrip /></Handle>
        <Pinned>
          {tasks.map(([k, open]) => (
            <TaskButton key={k} $open={open} aria-label={k}>
              <svg width="30" height="30" viewBox="0 0 30 30">
                {taskArt[k]}
                {k === "topcon" && (
                  <>
                    <TopconWords x="15" y="23">TOPCON</TopconWords>
                    <TopconWords x="15" y="29">TOOLS</TopconWords>
                  </>
                )}
              </svg>
            </TaskButton>
          ))}
        </Pinned>
        <Handle $gap={9}><DotGrip /></Handle>
        <BandTitle>Escritorio</BandTitle>
        <Links>
          <BandLink href="#bibliotecas" $w={150}>
            <svg width="16" height="15" viewBox="0 0 31 30">{folder}</svg>Bibliotecas
          </BandLink>
          <BandLink href="#propietario" $w={90}>
            <svg width="16" height="15" viewBox="0 0 16 15"><path d="M2 1h9v13H2z" fill="#e8cc6c" stroke="#b8983c" /><path d="M2 1l5 2v12l-5-1z" fill="#f6e596" /><circle cx="11" cy="6" r="2.500" fill="#a86c3c" /><path d="M7 14c0-6 8-6 8 0z" fill="#5cb088" /></svg>
            Propietario
          </BandLink>
        </Links>
        <Chevron aria-label="More">»</Chevron>
        <DotGrip />
        <Tray><span>ES</span>{trayIcons}</Tray>
        <Clock>07:49 a.m.<br />17/07/2019</Clock>
        <ShowDesktop aria-label="Show desktop" />
      </TaskBar>
      <EdgeStrip>
        <defs>
          <pattern id="edge" width="5" height="72" patternUnits="userSpaceOnUse">
            {noise.map((n, i) => <rect key={i} x={n.x} y={n.y} width="1" height="1" fill={n.c} />)}
          </pattern>
        </defs>
        <rect width="5" height="100%" fill="url(#edge)" />
      </EdgeStrip>
    </Desktop>
  );
}
